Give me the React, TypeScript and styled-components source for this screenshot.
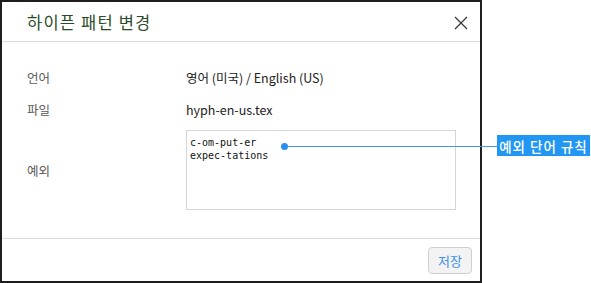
import React from 'react';
import styled, {createGlobalStyle} from "styled-components";

const GlobalStyle = createGlobalStyle`
    html, body {
        margin: 0;
        padding: 0;
        background: #fff;
    }
    body {
        font-family: "Noto Sans CJK KR", "Noto Sans", sans-serif;
    }
`;

const Page = styled.div`
    position: relative;
    width: 591px;
    height: 283px;
    overflow: hidden;
`;

const Dialog = styled.div`
    box-sizing: border-box;
    width: 482px;
    height: 283px;
    border: 2px solid #1e1e1e;
    background: #fff;
    display: flex;
    flex-direction: column;
`;

const Header = styled.div`
    height: 39px;
    border-bottom: 1px solid #dcdcdc;
    display: flex;
    align-items: center;
    justify-content: space-between;
    padding: 0 12px 0 25px;
`;

const Title = styled.h1`
    margin: 0;
    font-size: 16.5px;
    font-weight: 400;
    color: #2a4a2a;
    letter-spacing: 1.2px;
`;

const CloseButton = styled.button`
    border: 0;
    background: none;
    padding: 0;
    margin-top: 2px;
    width: 15px;
    height: 15px;
    display: flex;
    align-items: center;
    justify-content: center;
    cursor: pointer;
`;

const Body = styled.div`
    flex: 1;
    padding: 19px 0 0 25px;
    display: grid;
    grid-template-columns: 159px 270px;
    grid-auto-rows: min-content;
    align-items: center;
`;

const Label = styled.div<{ $tall?: boolean }>`
    height: 32px;
    display: flex;
    align-items: center;
    font-size: 12.5px;
    color: #5a5a5a;
    margin-top: ${p => p.$tall ? '5px' : '0'};
`;

const Value = styled.div`
    height: 32px;
    display: flex;
    align-items: center;
    font-size: 12.5px;
    color: #222;
`;

const Exceptions = styled.textarea`
    box-sizing: border-box;
    width: 270px;
    height: 80px;
    margin-top: 5px;
    border: 1px solid #d6d6d6;
    padding: 5px 3px;
    resize: none;
    font-family: "DejaVu Sans Mono", "Liberation Mono", monospace;
    font-size: 10px;
    line-height: 13px;
    color: #111;
    outline: none;
`;

const Footer = styled.div`
    height: 43px;
    border-top: 1px solid #dcdcdc;
    display: flex;
    justify-content: flex-end;
    align-items: flex-start;
    padding: 8px 8px 0 0;
    box-sizing: border-box;
`;

const SaveButton = styled.button`
    height: 27px;
    padding: 0 9px;
    border: 1px solid #cfcfcf;
    border-radius: 4px;
    background: #f3f3f3;
    color: #3b8fe8;
    font-family: "Noto Sans CJK KR", sans-serif;
    font-size: 13px;
    cursor: pointer;
`;

const CalloutLine = styled.div`
    position: absolute;
    left: 284px;
    top: 146px;
    width: 213px;
    height: 1px;
    background: #3d9cf0;
`;

const CalloutDot = styled.div`
    position: absolute;
    left: 281px;
    top: 143px;
    width: 7px;
    height: 7px;
    border-radius: 50%;
    background: #2a8ff0;
`;

const CalloutTag = styled.div`
    position: absolute;
    left: 497px;
    top: 135px;
    width: 93px;
    height: 21px;
    background: #2196f3;
    color: #fff;
    font-size: 13.5px;
    font-weight: 500;
    display: flex;
    align-items: center;
    justify-content: center;
    letter-spacing: 1px;
`;

const App = () => {
    return (
        <Page>
            <GlobalStyle/>
            <Dialog>
                <Header>
                    <Title>하이픈 패턴 변경</Title>
                    <CloseButton aria-label="닫기">
                        <svg width="14" height="14" viewBox="0 0 14 14">
                            <path d="M1 1 L13 13 M13 1 L1 13" stroke="#333" strokeWidth="1.2"/>
                        </svg>
                    </CloseButton>
                </Header>
                <Body>
                    <Label>언어</Label>
                    <Value>영어 (미국) / English (US)</Value>
                    <Label>파일</Label>
                    <Value>hyph-en-us.tex</Value>
                    <Label $tall>예외</Label>
                    <Exceptions defaultValue={'c-om-put-er\nexpec-tations'}/>
                </Body>
                <Footer>
                    <SaveButton>저장</SaveButton>
                </Footer>
            </Dialog>
            <CalloutLine/>
            <CalloutDot/>
            <CalloutTag>예외 단어 규칙</CalloutTag>
        </Page>
    );
};

export default App;
